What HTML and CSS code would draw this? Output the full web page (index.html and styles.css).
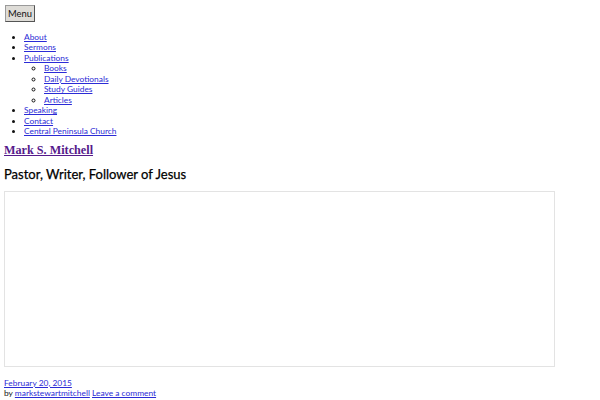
FILE: index.html
```html
<!DOCTYPE html>
<html>
<head>
<meta charset="utf-8">
<link rel="stylesheet" href="styles.css">
</head>
<body>
<div class="page">
  <button class="menu-btn">Menu</button>
  <ul class="nav">
    <li><a href="#">About</a></li>
    <li><a href="#">Sermons</a></li>
    <li><a href="#">Publications</a>
      <ul class="sub">
        <li><a href="#">Books</a></li>
        <li><a href="#">Daily Devotionals</a></li>
        <li><a href="#">Study Guides</a></li>
        <li><a href="#">Articles</a></li>
      </ul>
    </li>
    <li><a href="#">Speaking</a></li>
    <li><a href="#">Contact</a></li>
    <li><a href="#">Central Peninsula Church</a></li>
  </ul>
  <h1 class="site-title"><a href="#">Mark S. Mitchell</a></h1>
  <h2 class="tagline">Pastor, Writer, Follower of Jesus</h2>
  <div class="frame"></div>
  <div class="meta">
    <a href="#">February 20, 2015</a><br>
    by <a href="#">markstewartmitchell</a> <a href="#">Leave a comment</a>
  </div>
</div>
</body>
</html>
```
FILE: styles.css
```css
html, body { margin: 0; padding: 0; background: #fff; }
body { font-family: Lato, "Open Sans", sans-serif; color: #111; font-size: 8.4px; line-height: 10.45px; }
.page { padding: 5px 4px; }
a { color: #2b2bd6; }
.menu-btn {
  display: block;
  font-family: Lato, sans-serif; font-size: 9.4px;
  height: 17px; padding: 0 2px; margin-left: 1px;
  background: #dedcd7; border: 1px solid #9a9a9a;
  border-right-color: #555; border-bottom-color: #555;
  color: #111;
}
.nav { margin: 10px 0 0 0; padding-left: 20px; list-style: disc; }
.sub { margin: 0; padding-left: 20px; list-style: circle; }
.site-title { font-family: "Liberation Serif", serif; font-size: 12.2px; line-height: 16px; font-weight: bold; margin: 5px 0 0 0; }
.site-title a { color: #551a8b; }
.tagline { font-family: Lato, sans-serif; font-size: 13px; font-weight: normal; line-height: 16px; margin: 8px 0 0 0; color: #000; -webkit-text-stroke: 0.25px #000; }
.frame { width: 549px; height: 174px; border: 1px solid #e3e3e3; margin-top: 9px; }
.meta { margin-top: 11px; }
```
